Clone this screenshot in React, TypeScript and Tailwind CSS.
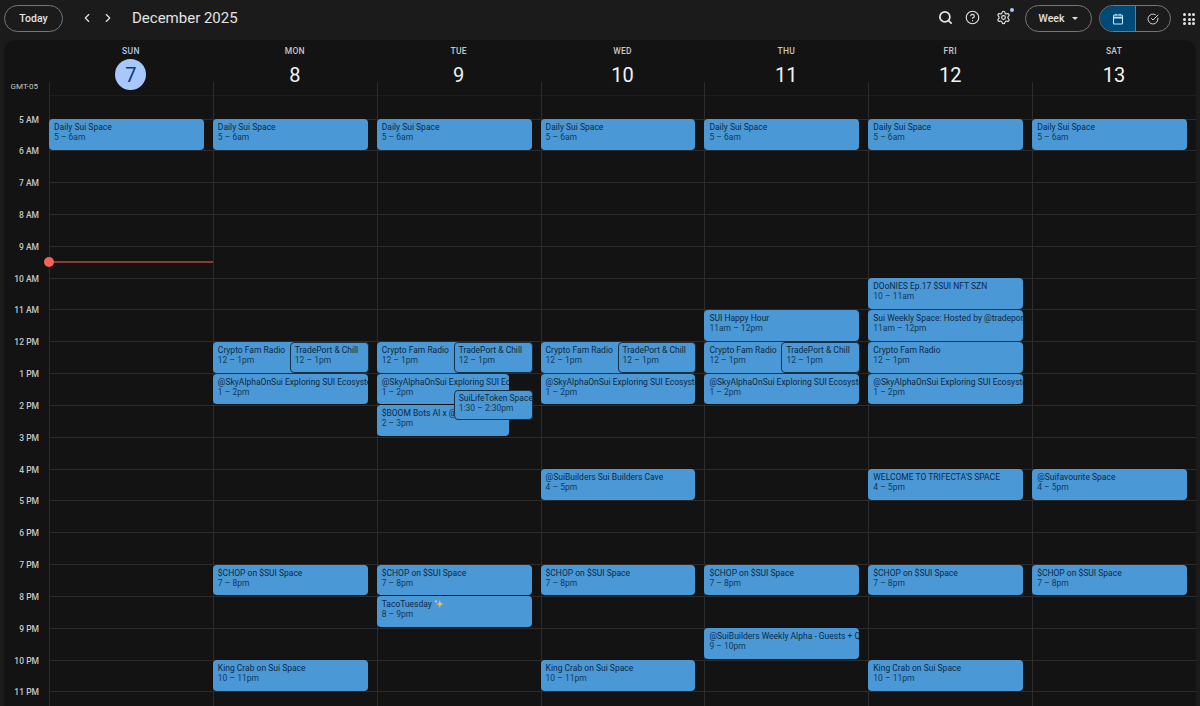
import React from 'react';
import { ChevronLeft, ChevronRight, Search, CircleHelp, Settings, CircleCheckBig } from 'lucide-react';

interface CalEvent {
  day: number;
  start: number;
  end: number;
  title: string;
  time: string;
  // left/wide = left part of an overlap, right = right part with the dark outline
  slot?: 'left' | 'right' | 'wide';
  sparkle?: boolean;
}

const HOUR = 31.83;
const TOP_GAP = 36.5;

const days = [
  { name: 'SUN', num: '7', today: true },
  { name: 'MON', num: '8' },
  { name: 'TUE', num: '9' },
  { name: 'WED', num: '10' },
  { name: 'THU', num: '11' },
  { name: 'FRI', num: '12' },
  { name: 'SAT', num: '13' },
];

const hours = ['5 AM', '6 AM', '7 AM', '8 AM', '9 AM', '10 AM', '11 AM', '12 PM', '1 PM', '2 PM', '3 PM', '4 PM', '5 PM', '6 PM', '7 PM', '8 PM', '9 PM', '10 PM', '11 PM'];

const events: CalEvent[] = [
  ...[0, 1, 2, 3, 4, 5, 6].map((day) => ({ day, start: 5, end: 6, title: 'Daily Sui Space', time: '5 – 6am' })),
  { day: 5, start: 10, end: 11, title: 'DOoNIES Ep.17 $SUI NFT SZN', time: '10 – 11am' },
  { day: 4, start: 11, end: 12, title: 'SUI Happy Hour', time: '11am – 12pm' },
  { day: 5, start: 11, end: 12, title: 'Sui Weekly Space: Hosted by @tradeport', time: '11am – 12pm' },
  ...[1, 2, 3, 4].flatMap((day): CalEvent[] => [
    { day, start: 12, end: 13, title: 'Crypto Fam Radio', time: '12 – 1pm', slot: 'left' },
    { day, start: 12, end: 13, title: 'TradePort & Chill', time: '12 – 1pm', slot: 'right' },
  ]),
  { day: 5, start: 12, end: 13, title: 'Crypto Fam Radio', time: '12 – 1pm' },
  ...[1, 3, 4, 5].map((day) => ({ day, start: 13, end: 14, title: '@SkyAlphaOnSui Exploring SUI Ecosystem', time: '1 – 2pm' })),
  { day: 2, start: 13, end: 14, title: '@SkyAlphaOnSui Exploring SUI Ecosystem', time: '1 – 2pm', slot: 'wide' },
  { day: 2, start: 14, end: 15, title: '$BOOM Bots AI x @SuiNetwork', time: '2 – 3pm', slot: 'wide' },
  { day: 2, start: 13.5, end: 14.5, title: 'SuiLifeToken Space', time: '1:30 – 2:30pm', slot: 'right' },
  { day: 3, start: 16, end: 17, title: '@SuiBuilders Sui Builders Cave', time: '4 – 5pm' },
  { day: 5, start: 16, end: 17, title: "WELCOME TO TRIFECTA'S SPACE", time: '4 – 5pm' },
  { day: 6, start: 16, end: 17, title: '@Suifavourite Space', time: '4 – 5pm' },
  ...[1, 2, 3, 4, 5, 6].map((day) => ({ day, start: 19, end: 20, title: '$CHOP on $SUI Space', time: '7 – 8pm' })),
  { day: 2, start: 20, end: 21, title: 'TacoTuesday', time: '8 – 9pm', sparkle: true },
  { day: 4, start: 21, end: 22, title: '@SuiBuilders Weekly Alpha - Guests + Q&A', time: '9 – 10pm' },
  ...[1, 3, 5].map((day) => ({ day, start: 22, end: 23, title: 'King Crab on Sui Space', time: '10 – 11pm' })),
];

const Sparkle = () => (
  <svg viewBox="0 0 12 12" className="ml-[2px] inline-block h-[10px] w-[10px] align-[-2px]">
    <path d="M7 1 8.2 4.8 11.5 6 8.2 7.2 7 11 5.8 7.2 2.5 6 5.8 4.8Z" fill="#f2b866" />
    <path d="M2.5 0.5 3.1 2 4.5 2.6 3.1 3.2 2.5 4.7 1.9 3.2 0.5 2.6 1.9 2Z" fill="#f7d39a" />
  </svg>
);

const EventCard = ({ ev }: { ev: CalEvent }) => {
  const top = TOP_GAP + (ev.start - 5) * HOUR + 0.5;
  const height = (ev.end - ev.start) * HOUR - 1;
  let placement = 'left-[-1px] right-[9px] pl-[5px] pt-[3px]';
  if (ev.slot === 'right') placement = 'left-[76px] right-[8px] z-10 border border-[#1a2f42] pl-[4px] pt-[2px]';
  if (ev.slot === 'wide') placement = 'left-[-1px] right-[32px] pl-[5px] pt-[3px]';
  return (
    <div
      className={`absolute overflow-hidden rounded-[4px] bg-[#4a98d5] text-[8.5px] leading-[10px] text-[#0e2a44] whitespace-nowrap ${placement}`}
      style={{ top, height }}
    >
      <div>
        {ev.title}
        {ev.sparkle && <Sparkle />}
      </div>
      <div className="text-[#153a5a]">{ev.time}</div>
    </div>
  );
};

export default function App() {
  return (
    <div className="h-[706px] w-[1200px] overflow-hidden bg-[#1b1b1b] font-['Roboto',sans-serif] text-white">
      {/* top bar */}
      <div className="flex h-[40px] items-start pt-[5px]">
        <button className="ml-[4px] flex h-[27px] w-[59px] items-center justify-center rounded-full border border-[#757775] text-[10.5px] font-medium text-[#e3e3e3]">
          Today
        </button>
        <ChevronLeft className="ml-[17px] mt-[6px] h-[14px] w-[14px] text-[#e3e3e3]" />
        <ChevronRight className="ml-[7px] mt-[6px] h-[14px] w-[14px] text-[#e3e3e3]" />
        <div className="ml-[17px] mt-[3px] text-[15px] leading-[20px] text-[#e3e3e3]">December 2025</div>

        <div className="ml-auto flex items-start">
          <Search className="mt-[5px] h-[15px] w-[15px] text-[#e3e3e3]" strokeWidth={2.8} />
          <CircleHelp className="ml-[12px] mt-[5px] h-[15px] w-[15px] text-[#e3e3e3]" strokeWidth={1.8} />
          <div className="relative ml-[16px] mt-[5px]">
            <Settings className="h-[15px] w-[15px] text-[#e3e3e3]" strokeWidth={1.8} />
            <span className="absolute right-[-3px] top-[-2px] h-[4px] w-[4px] rounded-full bg-[#a8c7fa]" />
          </div>
          <button className="ml-[14px] flex h-[27px] w-[67px] items-center justify-center gap-[8px] rounded-full border border-[#757775] text-[10.5px] font-medium text-[#e3e3e3]">
            Week
            <svg viewBox="0 0 8 4" className="h-[3px] w-[6px]">
              <path d="M0 0h8L4 4Z" fill="#e3e3e3" />
            </svg>
          </button>
          <div className="ml-[7px] flex h-[27px] w-[72px] overflow-hidden rounded-full border border-[#757775]">
            <div className="flex w-[35px] items-center justify-center bg-[#004a77]">
              <svg viewBox="0 0 12 12" className="h-[12px] w-[12px]" fill="none" stroke="#c2e7ff" strokeWidth="1.1">
                <rect x="1.5" y="2" width="9" height="9" rx="1" />
                <path d="M1.5 4.6h9" strokeWidth="1.6" />
                <path d="M4 0.8v1.8M8 0.8v1.8" />
              </svg>
            </div>
            <div className="flex flex-1 items-center justify-center border-l border-[#757775]">
              <CircleCheckBig className="h-[12px] w-[12px] text-[#e3e3e3]" strokeWidth={1.8} />
            </div>
          </div>
          <div className="ml-[12px] mr-[5px] mt-[8px] grid h-[12px] w-[12px] grid-cols-3 gap-[1.5px]">
            {Array.from({ length: 9 }).map((_, i) => (
              <span key={i} className="rounded-full bg-[#e3e3e3]" />
            ))}
          </div>
        </div>
      </div>

      {/* calendar panel */}
      <div className="mx-[4px] flex h-[666px] flex-col overflow-hidden rounded-t-[12px] bg-[#131313]">
        {/* day headings */}
        <div className="flex h-[42px] shrink-0">
          <div className="relative w-[45px] shrink-0">
            <span className="absolute right-[11px] top-[42px] text-[8px] leading-[10px] text-[#c4c7c5]">GMT-05</span>
          </div>
          <div className="grid flex-1 grid-cols-7">
            {days.map((d) => (
              <div key={d.name} className="relative flex flex-col items-center pt-[6px]">
                <span className={`text-[8.5px] font-medium leading-[10px] tracking-[0.3px] ${d.today ? 'text-[#a8c7fa]' : 'text-[#c4c7c5]'}`}>{d.name}</span>
                <span
                  className={`mt-[3px] flex h-[31px] w-[31px] items-center justify-center rounded-full text-[20px] ${
                    d.today ? 'bg-[#a8c7fa] text-[#0b3a78]' : 'text-[#f1f3f4]'
                  }`}
                >
                  {d.num}
                </span>
              </div>
            ))}
          </div>
        </div>

        {/* time grid */}
        <div className="relative flex flex-1 overflow-hidden">
          <div className="w-[45px] shrink-0">
            <div className="h-[36.5px]" />
            {hours.map((h) => (
              <div key={h} className="relative h-[31.83px]">
                <span className="absolute right-[10px] top-[-4px] text-[8.5px] font-medium leading-[10px] text-[#c4c7c5]">{h}</span>
              </div>
            ))}
          </div>
          <div className="relative z-0 grid flex-1 grid-cols-7">
            {/* hour lines */}
            <div className="absolute inset-0 -z-10">
              <div className="h-[36.5px] pt-[13px]">
                <div className="h-px bg-[#1d1d1d]" />
              </div>
              {hours.map((h) => (
                <div key={h} className="h-[31.83px] border-t border-[#2c2c2c]" />
              ))}
            </div>
            {days.map((d, i) => (
              <div key={d.name} className="relative border-l border-[#2c2c2c]">
                {events
                  .filter((e) => e.day === i)
                  .map((e, idx) => (
                    <EventCard key={idx} ev={e} />
                  ))}
                {d.today && (
                  <div className="absolute left-[-1px] right-0 top-[179px] z-20 h-[2px] bg-[#8a3b37]">
                    <span className="absolute left-[-5px] top-[-4px] h-[10px] w-[10px] rounded-full bg-[#f8615c]" />
                  </div>
                )}
              </div>
            ))}
          </div>
        </div>
      </div>
    </div>
  );
}
